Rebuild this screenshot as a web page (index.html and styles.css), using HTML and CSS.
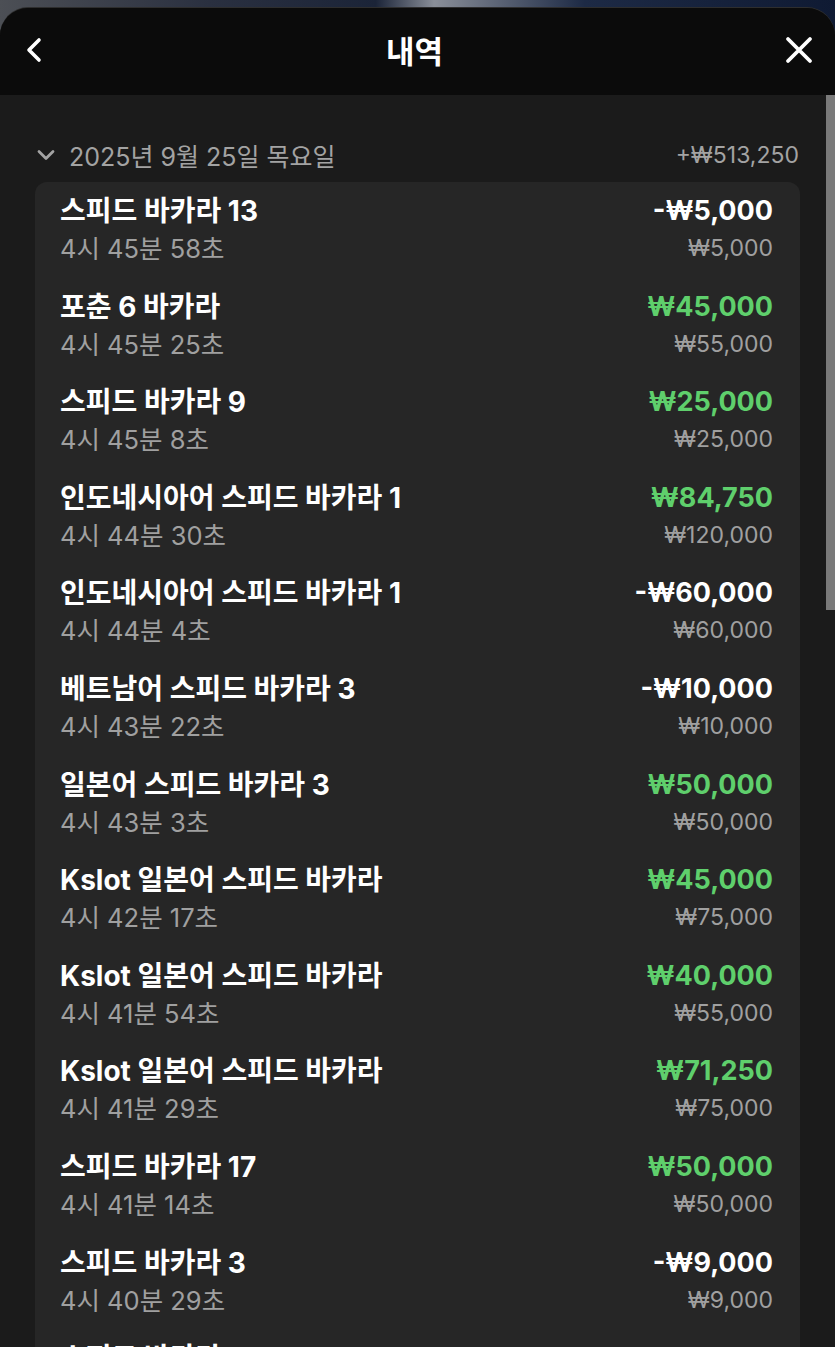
FILE: index.html
```html
<!DOCTYPE html>
<html lang="ko">
<head>
<meta charset="utf-8">
<title>내역</title>
<link rel="stylesheet" href="styles.css">
</head>
<body>
<div class="backdrop"></div>
<div class="sheet">
  <header class="topbar">
    <button class="icon-btn back" aria-label="뒤로">
      <svg width="20" height="28" viewBox="0 0 20 28"><path d="M15 4 L5 14 L15 24" fill="none" stroke="#fff" stroke-width="3.6" stroke-linecap="round" stroke-linejoin="round"/></svg>
    </button>
    <h1 class="title">내역</h1>
    <button class="icon-btn close" aria-label="닫기">
      <svg width="28" height="28" viewBox="0 0 28 28"><path d="M3 3 L25 25 M25 3 L3 25" fill="none" stroke="#fff" stroke-width="3.8" stroke-linecap="round"/></svg>
    </button>
  </header>
  <main class="content">
    <div class="day-head">
      <div class="day-left">
        <svg class="chev" width="20" height="14" viewBox="0 0 20 14"><path d="M3 3.5 L10 10.5 L17 3.5" fill="none" stroke="#a3a3a3" stroke-width="2.8" stroke-linecap="round" stroke-linejoin="round"/></svg>
        <span>2025년 9월 25일 목요일</span>
      </div>
      <span class="day-total">+₩513,250</span>
    </div>
    <div class="card">
      <div class="row"><div class="l"><div class="name">스피드 바카라 13</div><div class="time">4시 45분 58초</div></div><div class="r"><div class="amt">-₩5,000</div><div class="bet">₩5,000</div></div></div>
      <div class="row"><div class="l"><div class="name">포춘 6 바카라</div><div class="time">4시 45분 25초</div></div><div class="r"><div class="amt win">₩45,000</div><div class="bet">₩55,000</div></div></div>
      <div class="row"><div class="l"><div class="name">스피드 바카라 9</div><div class="time">4시 45분 8초</div></div><div class="r"><div class="amt win">₩25,000</div><div class="bet">₩25,000</div></div></div>
      <div class="row"><div class="l"><div class="name">인도네시아어 스피드 바카라 1</div><div class="time">4시 44분 30초</div></div><div class="r"><div class="amt win">₩84,750</div><div class="bet">₩120,000</div></div></div>
      <div class="row"><div class="l"><div class="name">인도네시아어 스피드 바카라 1</div><div class="time">4시 44분 4초</div></div><div class="r"><div class="amt">-₩60,000</div><div class="bet">₩60,000</div></div></div>
      <div class="row"><div class="l"><div class="name">베트남어 스피드 바카라 3</div><div class="time">4시 43분 22초</div></div><div class="r"><div class="amt">-₩10,000</div><div class="bet">₩10,000</div></div></div>
      <div class="row"><div class="l"><div class="name">일본어 스피드 바카라 3</div><div class="time">4시 43분 3초</div></div><div class="r"><div class="amt win">₩50,000</div><div class="bet">₩50,000</div></div></div>
      <div class="row"><div class="l"><div class="name">Kslot 일본어 스피드 바카라</div><div class="time">4시 42분 17초</div></div><div class="r"><div class="amt win">₩45,000</div><div class="bet">₩75,000</div></div></div>
      <div class="row"><div class="l"><div class="name">Kslot 일본어 스피드 바카라</div><div class="time">4시 41분 54초</div></div><div class="r"><div class="amt win">₩40,000</div><div class="bet">₩55,000</div></div></div>
      <div class="row"><div class="l"><div class="name">Kslot 일본어 스피드 바카라</div><div class="time">4시 41분 29초</div></div><div class="r"><div class="amt win">₩71,250</div><div class="bet">₩75,000</div></div></div>
      <div class="row"><div class="l"><div class="name">스피드 바카라 17</div><div class="time">4시 41분 14초</div></div><div class="r"><div class="amt win">₩50,000</div><div class="bet">₩50,000</div></div></div>
      <div class="row"><div class="l"><div class="name">스피드 바카라 3</div><div class="time">4시 40분 29초</div></div><div class="r"><div class="amt">-₩9,000</div><div class="bet">₩9,000</div></div></div>
      <div class="row"><div class="l"><div class="name">스피드 바카라 6</div><div class="time">4시 40분 2초</div></div><div class="r"><div class="amt win">₩5,000</div><div class="bet">₩5,000</div></div></div>
    </div>
  </main>
  <div class="scrollbar"><div class="thumb"></div></div>
</div>
</body>
</html>
```
FILE: styles.css
```css
* { box-sizing: border-box; }
html, body {
  margin: 0;
  padding: 0;
  height: 100%;
  overflow: hidden;
}
body {
  background: linear-gradient(90deg, #4c4f55 0%, #2a3040 25%, #1b2438 45%, #8a8f99 52%, #1d2a45 70%, #0f1a33 100%);
  font-family: "Inter", "Noto Sans CJK KR", "Noto Sans", sans-serif;
  color: #fff;
  position: relative;
}
.backdrop { height: 8px; }
.sheet {
  position: relative;
  height: 1339px;
  background: #1b1b1b;
  border-radius: 28px 28px 0 0;
  overflow: hidden;
  box-shadow: 0 -1px 0 #2e2e2e;
}
.topbar {
  height: 87px;
  background: #0b0b0b;
  display: flex;
  align-items: center;
  justify-content: space-between;
  padding: 0 22px 4px 24px;
}
.icon-btn {
  background: none;
  border: 0;
  padding: 0;
  display: flex;
  align-items: center;
}
.title {
  margin: 0;
  font-size: 31px;
  font-weight: 700;
  font-family: "Noto Sans CJK KR", sans-serif;
  letter-spacing: 0;
}
.content {
  padding: 42px 35px 0 35px;
}
.day-head {
  height: 36px;
  display: flex;
  align-items: center;
  justify-content: space-between;
  margin-bottom: 9px;
  color: #a3a3a3;
  font-size: 23px;
}
.day-left {
  display: flex;
  align-items: center;
  gap: 13px;
  font-size: 25px;
}
.chev { margin-left: 1px; }
.day-total { margin-right: 1px; }
.card {
  background: #262626;
  border-radius: 12px;
  padding: 0 27px 0 25px;
}
.row {
  display: flex;
  justify-content: space-between;
  padding: 12px 0 8.6px;
  height: 95.6px;
}
.name {
  font-size: 28px;
  font-weight: 700;
  line-height: 34px;
  color: #fff;
}
.time {
  font-size: 25.5px;
  line-height: 41px;
  color: #a0a0a0;
}
.r { text-align: right; }
.amt {
  font-size: 27px;
  font-weight: 700;
  line-height: 34px;
  color: #fff;
}
.amt.win { color: #5fcf6c; }
.bet {
  font-size: 23px;
  line-height: 41px;
  color: #a0a0a0;
}
.scrollbar {
  position: absolute;
  right: 0;
  top: 87px;
  width: 9px;
  bottom: 0;
  background: #1b1b1b;
}
.thumb {
  height: 515px;
  background: #7a7a7a;
}
```
